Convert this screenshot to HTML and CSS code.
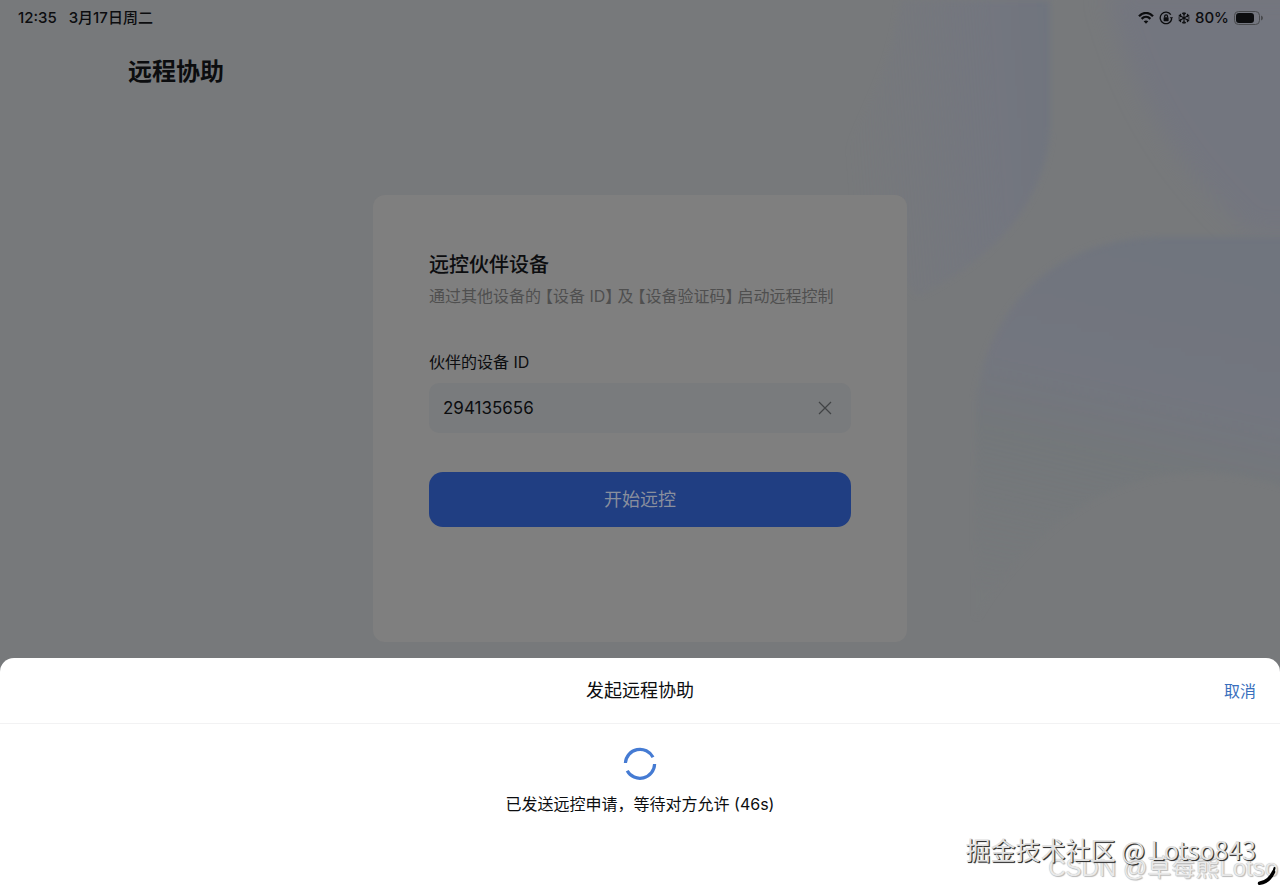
FILE: index.html
```html
<!DOCTYPE html>
<html lang="zh-CN">
<head>
<meta charset="utf-8">
<meta name="viewport" content="width=device-width, initial-scale=1">
<title>远程协助</title>
<link rel="stylesheet" href="styles.css">
</head>
<body>
<svg class="backdrop" viewBox="0 0 460 660" aria-hidden="true">
  <defs>
    <linearGradient id="petal" x1="0" y1="0.3" x2="1" y2="0.2">
      <stop offset="0.05" stop-color="#73767f" stop-opacity="0"/>
      <stop offset="0.75" stop-color="#73767f"/>
      <stop offset="1" stop-color="#70757e"/>
    </linearGradient>
    <linearGradient id="ray" x1="0" y1="1" x2="0.6" y2="0.3">
      <stop offset="0" stop-color="#73767e" stop-opacity="0.5"/>
      <stop offset="0.5" stop-color="#73767f"/>
    </linearGradient>
    <linearGradient id="disc" x1="0.6" y1="0" x2="0.4" y2="1">
      <stop offset="0" stop-color="#70757e"/>
      <stop offset="0.4" stop-color="#73767f"/>
      <stop offset="0.6" stop-color="#73777a" stop-opacity="0.9"/>
      <stop offset="1" stop-color="#74787b" stop-opacity="0.2"/>
    </linearGradient>
    <filter id="soft"><feGaussianBlur stdDeviation="3"/></filter>
    <filter id="softer"><feGaussianBlur stdDeviation="12"/></filter>
  </defs>
  <path filter="url(#soft)" fill="url(#petal)" d="M80-20H230V110C226 180 176 238 98 276C60 240 10 200 10 170C40 90 70 60 80-20Z"/>
  <path filter="url(#softer)" fill="url(#ray)" d="M285-30C310 60 340 130 430 215H500V-30Z"/>
  <path filter="url(#soft)" fill="url(#disc)" d="M156 600V380C170 280 240 218 340 217H500V480C360 420 240 460 156 600Z"/>
</svg>

<header class="status">
  <div class="status-group status-left"><time>12:35</time><span>3月17日周二</span></div>
  <div class="status-group status-right">
    <svg width="16" height="12" viewBox="0 0 16 12" fill="none" stroke="currentColor" stroke-width="2.200" aria-label="Wi-Fi">
      <path d="M1 4.200C5-.2 11-.2 15 4.200M3.600 6.900c2.600-2.600 6.200-2.600 8.800 0"/>
      <path d="M8 11.800L5.700 9.300q2.300-1.800 4.600 0z" fill="currentColor" stroke="none"/>
    </svg>
    <svg width="14" height="14" viewBox="0 0 14 14" fill="none" stroke="currentColor" stroke-width="1.300" aria-label="方向锁定">
      <path d="M11.800 3.600A5.800 5.800 0 1 0 12.700 8"/><path d="M10.700 6.200h3.300l-1.400 2.300z" fill="currentColor" stroke="none"/>
      <rect x="4.600" y="6.300" width="5" height="3.900" rx=".7" fill="currentColor" stroke="none"/><path d="M5.700 6.500V5.200a1.400 1.400 0 0 1 2.800 0v1.300"/>
    </svg>
    <svg width="12" height="14" viewBox="0 0 12 14" fill="none" stroke="currentColor" stroke-width="1.100" aria-label="低温模式">
      <path d="M6 1v12M.8 4l10.400 6M.8 10l10.400-6M4.200 1.800L6 3.600l1.800-1.800M4.200 12.200L6 10.400l1.800 1.800M.5 6.200L3 5.400l-.6-2.600M11.500 7.800L9 8.600l.6 2.600M.5 7.800L3 8.600l-.6 2.600M11.500 6.200L9 5.400l.6-2.600"/>
    </svg>
    <span>80%</span>
    <svg width="29" height="14" viewBox="0 0 29 14" aria-label="电池">
      <rect x=".5" y=".5" width="25" height="13" rx="4" fill="none" stroke="#484a4d"/>
      <rect x="2" y="2" width="18" height="10" rx="3" fill="currentColor"/>
      <path d="M27 4.500q2 .7 2 2.500t-2 2.500z" fill="#484a4d"/>
    </svg>
  </div>
</header>

<main class="page">
  <h1 class="page-title">远程协助</h1>
  <form class="card">
    <h2 class="card-title">远控伙伴设备</h2>
    <p class="card-note">通过其他设备的<span class="quoted">【设备 ID】</span>及<span class="quoted">【设备验证码】</span>启动远程控制</p>
    <label class="label" for="device-id">伙伴的设备 ID</label>
    <div class="field">
      <input id="device-id" class="field-input" type="text" inputmode="numeric" value="294135656">
      <button class="field-clear" type="button" aria-label="清除">
        <svg width="14" height="14" viewBox="0 0 14 14" fill="none" stroke="currentColor" stroke-width="1.200"><path d="M1 1l12 12M13 1L1 13"/></svg>
      </button>
    </div>
    <button class="start" type="button">开始远控</button>
  </form>
</main>

<section class="sheet" role="dialog" aria-labelledby="sheet-title">
  <header class="sheet-head">
    <h2 class="sheet-title" id="sheet-title">发起远程协助</h2>
    <button class="cancel" type="button">取消</button>
  </header>
  <div class="sheet-body">
    <svg width="34" height="34" viewBox="0 0 34 34" fill="none" stroke="#457bd3" stroke-width="3.200" aria-hidden="true">
      <path d="M2.400 16A14.600 14.600 0 0 1 30 10.300M31.600 17A14.600 14.600 0 0 1 4.200 23.700"/>
    </svg>
    <p class="sheet-text" role="status">已发送远控申请，等待对方允许 (46s)</p>
  </div>
</section>

<div class="marks">
  <span class="mark mark-csdn">CSDN @草莓熊Lotso</span>
  <span class="mark mark-juejin">掘金技术社区 @ Lotso843</span>
  <svg class="corner" width="20" height="20" viewBox="0 0 20 20" fill="none" stroke="#000" stroke-linecap="round" aria-hidden="true"><path d="M2.500 17.300Q12 16 16.500 6" stroke-width="3.500"/><path d="M12 13Q16 9 17.500 2" stroke-width="2"/></svg>
</div>
</body>
</html>
```
FILE: styles.css
```css
* { box-sizing: border-box; }

body {
  position: relative;
  display: flex;
  flex-direction: column;
  min-height: 100vh;
  margin: 0;
  overflow-x: hidden;
  background: #77797b;
  color: #0c0d0f;
  font-family: Inter, "Noto Sans CJK SC", sans-serif;
  font-size: 16px;
  line-height: 24px;
}

h1, h2, p { margin: 0; }

button, input {
  padding: 0;
  border: 0;
  background: none;
  color: inherit;
  font: inherit;
}

.backdrop {
  position: absolute;
  z-index: -1;
  top: 20px;
  right: 0;
  width: 460px;
  height: 660px;
  overflow: visible;
}

.status {
  display: flex;
  justify-content: space-between;
  padding: 6px 17px 0 18px;
  font-size: 15px;
  font-weight: 500;
}

.status-group { display: flex; align-items: center; }
.status-left { gap: 12px; }
.status-right { gap: 5px; }

.page {
  display: flex;
  flex: 1;
  flex-direction: column;
  padding: 24px 128px 16px;
}

.page-title {
  font-size: 24px;
  font-weight: 700;
  line-height: 36px;
}

.card {
  display: flex;
  flex: 1;
  flex-direction: column;
  width: 100%;
  max-width: 534px;
  margin: 105px auto 0;
  padding: 54px 56px 56px;
  border-radius: 12px;
  background: #7f7f7f;
}

.card-title {
  font-size: 20px;
  font-weight: 500;
  line-height: 32px;
}

.card-note {
  margin-top: 3px;
  color: #4f4f4f;
  white-space: nowrap;
}

.quoted {
  margin: 0 4px;
  font-feature-settings: "halt";
}

.label { margin-top: 42px; }

.field {
  display: flex;
  align-items: center;
  height: 50px;
  margin-top: 9px;
  padding: 0 19px 0 14px;
  border-radius: 10px;
  background: #797b7d;
}

.field-input {
  flex: 1;
  min-width: 0;
  font-size: 17px;
  outline: 0;
}

.field-clear { display: flex; color: #414345; }

.start {
  height: 55px;
  margin-top: 39px;
  border-radius: 14px;
  background: #203e82;
  color: #898f9d;
  font-size: 18px;
}

.sheet {
  min-height: 231px;
  border-radius: 14px 14px 0 0;
  background: #fff;
}

.sheet-head {
  display: grid;
  grid-template-columns: 1fr auto 1fr;
  align-items: center;
  height: 66px;
  padding: 0 24px;
  border-bottom: 1px solid #f2f2f3;
}

.sheet-title {
  grid-column: 2;
  font-size: 18px;
  font-weight: 400;
}

.cancel { justify-self: end; color: #3a6fbd; }

.sheet-body {
  display: flex;
  flex-direction: column;
  align-items: center;
  gap: 11px;
  padding: 23px 16px;
}

.marks {
  position: absolute;
  right: 0;
  bottom: 0;
  width: 330px;
  height: 60px;
  pointer-events: none;
}

.mark { position: absolute; white-space: nowrap; }

.mark-csdn {
  right: 2px;
  bottom: 5px;
  color: #e9e9e9;
  font-family: "Liberation Sans", "Noto Sans CJK SC", sans-serif;
  font-size: 24px;
  line-height: 32px;
  text-shadow: 0 0 1px #aaa, 1px 1px 1px #bbb;
}

.mark-juejin {
  right: 24px;
  bottom: 22px;
  color: #e2e2e2;
  font-family: "Noto Sans CJK SC", sans-serif;
  font-size: 25px;
  line-height: 36px;
  text-shadow: 1px 1px 0 #333, 1px 1px 1px #555;
}

.corner { position: absolute; right: 3px; bottom: 3px; }
```
